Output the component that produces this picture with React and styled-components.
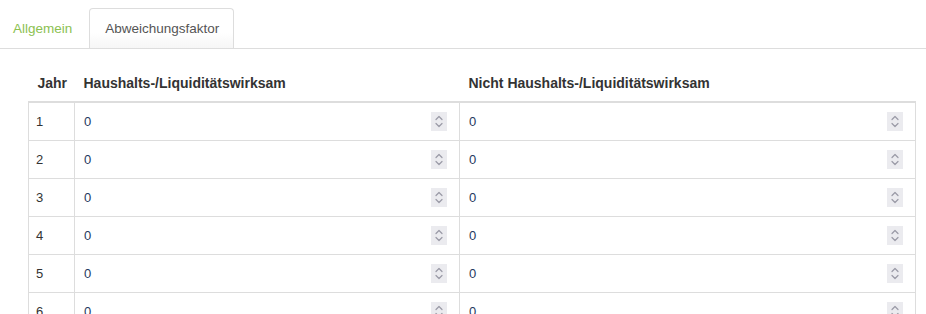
import React from "react";
import styled, { createGlobalStyle } from "styled-components";

const Global = createGlobalStyle`
  html, body { margin: 0; padding: 0; background: #fff; }
  body { font-family: "Liberation Sans", Arial, sans-serif; font-size: 13px; color: #333; }
`;

const Page = styled.div`
  width: 926px;
  height: 314px;
  overflow: hidden;
`;

const TabBar = styled.div`
  display: flex;
  align-items: flex-end;
  border-bottom: 1px solid #dddddd;
  box-sizing: border-box;
  height: 49px;
`;

const Tab = styled.div`
  height: 40px;
  display: flex;
  align-items: center;
  padding: 0 14px 0 15px;
  margin-right: 3px;
  box-sizing: border-box;
  font-size: 13.5px;
  color: ${(p) => (p.$active ? "#555555" : "#8cc152")};
  border: 1px solid ${(p) => (p.$active ? "#dddddd" : "transparent")};
  border-bottom: none;
  border-radius: 4px 4px 0 0;
  background: ${(p) => (p.$active ? "linear-gradient(#ffffff 60%, #f6f6f6)" : "transparent")};
  &:first-child { padding-left: 12px; margin-right: 2px; }
`;

const Content = styled.div`
  padding: 15px 11px 0 28px;
`;

const Table = styled.table`
  width: 887px;
  table-layout: fixed;
  border-collapse: collapse;
`;

const HeadCell = styled.th`
  height: 37px;
  padding: 0 9px;
  text-align: left;
  font-weight: bold;
  font-size: 14px;
  color: #333;
  border-bottom: 2px solid #dddddd;
  white-space: nowrap;
`;

const Row = styled.tr`
  height: 38px;
`;

const Cell = styled.td`
  border: 1px solid #dddddd;
  padding: 1px 12px 0 ${(p) => (p.$num ? "7px" : "9px")};
  font-size: 13px;
  color: #333;
  vertical-align: middle;
`;

const Field = styled.div`
  display: flex;
  align-items: center;
  justify-content: space-between;
  height: 20px;
`;

const Value = styled.span`
  color: #1f3a60;
  font-size: 13px;
`;

const Spinner = styled.div`
  width: 16px;
  height: 19px;
  background: #ebebef;
  display: flex;
  align-items: center;
  justify-content: center;
`;

const SpinIcon = () => (
  <svg width="10" height="15" viewBox="0 0 10 15" fill="none" stroke="#9a9aa6" strokeWidth="1.2" strokeLinecap="round" strokeLinejoin="round">
    <path d="M2 5.5 L5 2.5 L8 5.5" />
    <path d="M2 9.5 L5 12.5 L8 9.5" />
  </svg>
);

const NumberField = ({ value }) => (
  <Field>
    <Value>{value}</Value>
    <Spinner>
      <SpinIcon />
    </Spinner>
  </Field>
);

const years = [1, 2, 3, 4, 5, 6];

export default function App() {
  return (
    <Page>
      <Global />
      <TabBar>
        <Tab>Allgemein</Tab>
        <Tab $active>Abweichungsfaktor</Tab>
      </TabBar>
      <Content>
        <Table>
          <colgroup>
            <col style={{ width: 46 }} />
            <col style={{ width: 385 }} />
            <col style={{ width: 456 }} />
          </colgroup>
          <thead>
            <tr>
              <HeadCell>Jahr</HeadCell>
              <HeadCell>Haushalts-/Liquiditätswirksam</HeadCell>
              <HeadCell>Nicht Haushalts-/Liquiditätswirksam</HeadCell>
            </tr>
          </thead>
          <tbody>
            {years.map((y) => (
              <Row key={y}>
                <Cell $num>{y}</Cell>
                <Cell>
                  <NumberField value="0" />
                </Cell>
                <Cell>
                  <NumberField value="0" />
                </Cell>
              </Row>
            ))}
          </tbody>
        </Table>
      </Content>
    </Page>
  );
}
